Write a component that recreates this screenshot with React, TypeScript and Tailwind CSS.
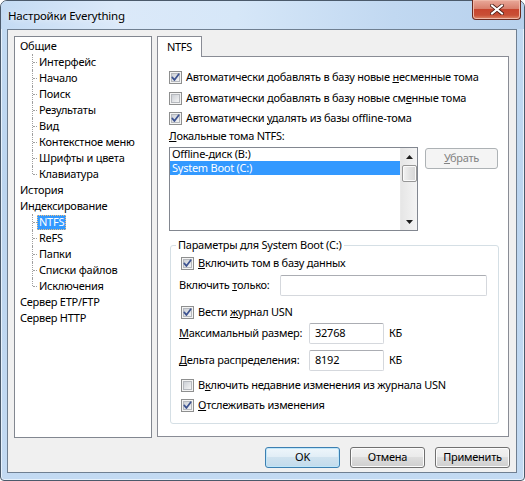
import React from "react";

const tree = [
  {
    title: "Общие",
    kids: ["Интерфейс", "Начало", "Поиск", "Результаты", "Вид", "Контекстное меню", "Шрифты и цвета", "Клавиатура"],
  },
  { title: "История", kids: [] },
  { title: "Индексирование", kids: ["NTFS", "ReFS", "Папки", "Списки файлов", "Исключения"] },
  { title: "Сервер ETP/FTP", kids: [] },
  { title: "Сервер HTTP", kids: [] },
];

function Check({ checked }: { checked?: boolean }) {
  return (
    <svg width="13" height="13" viewBox="0 0 13 13" className="shrink-0">
      <defs>
        <linearGradient id="cbg" x1="0" y1="0" x2="1" y2="1">
          <stop offset="0" stopColor="#c9cdd3" />
          <stop offset="1" stopColor="#f7f7f7" />
        </linearGradient>
      </defs>
      <rect x="0.5" y="0.5" width="12" height="12" fill="#f4f4f4" stroke="#8e8f8f" />
      <rect x="2.5" y="2.5" width="8" height="8" fill="url(#cbg)" stroke="#b5b8bd" />
      {checked && (
        <path d="M3.3 6.4 L5.4 9 L9.7 3.2" fill="none" stroke="#3c5290" strokeWidth="1.7" strokeLinecap="round" strokeLinejoin="round" />
      )}
    </svg>
  );
}

function CheckRow({ checked, children, className = "" }: { checked?: boolean; children: React.ReactNode; className?: string }) {
  return (
    <div className={`flex items-center gap-[4px] ${className}`}>
      <Check checked={checked} />
      <span className="whitespace-nowrap">{children}</span>
    </div>
  );
}

function Edit({ value, className = "" }: { value?: string; className?: string }) {
  return (
    <div
      className={`h-[21px] flex items-center pl-[5px] bg-white border border-[#d5d8dd] border-t-[#abadb3] rounded-[2px] ${className}`}
    >
      {value}
    </div>
  );
}

function Button({ children, primary, disabled }: { children: React.ReactNode; primary?: boolean; disabled?: boolean }) {
  if (disabled)
    return (
      <div className="w-[73px] h-[21px] flex items-center justify-center rounded-[3px] border border-[#adb2b5] bg-[#f4f4f4] text-[#838383]">
        {children}
      </div>
    );
  return (
    <div
      className={`w-[75px] h-[21px] flex items-center justify-center rounded-[3px] border ${
        primary
          ? "border-[#3c7fb1] bg-[linear-gradient(to_bottom,#eef6fb_0%,#e2eef6_45%,#cfe2ef_50%,#c2dbec_100%)] shadow-[inset_0_0_0_1px_#bfe6f9]"
          : "border-[#707070] bg-[linear-gradient(to_bottom,#f2f2f2_0%,#ebebeb_45%,#dddddd_50%,#cfcfcf_100%)] shadow-[inset_0_0_0_1px_#fcfcfc]"
      }`}
    >
      {children}
    </div>
  );
}

function Tree() {
  return (
    <div className="w-[138px] h-[402px] bg-white border border-[#828790] pt-[1px]">
      {tree.map((g) => (
        <div key={g.title}>
          <div className="h-4 flex items-center pl-[5px] whitespace-nowrap">{g.title}</div>
          {g.kids.map((k, i) => {
            const last = i === g.kids.length - 1;
            const sel = k === "NTFS";
            return (
              <div key={k} className="relative h-4 flex items-center pl-[22px] whitespace-nowrap">
                <span
                  className={`absolute left-[17px] top-0 border-l border-dotted border-[#a0a0a0] ${last ? "h-[8px]" : "h-4"}`}
                />
                <span className="absolute left-[18px] top-[8px] w-[4px] border-t border-dotted border-[#a0a0a0]" />
                <span
                  className={
                    sel
                      ? "h-[15px] flex items-center px-[1px] bg-[#3399ff] text-white border border-dotted border-[#f0c080]"
                      : "px-[2px]"
                  }
                >
                  {k}
                </span>
              </div>
            );
          })}
        </div>
      ))}
    </div>
  );
}

function ListBox() {
  return (
    <div className="w-[249px] h-[84px] bg-white border border-[#828790] flex">
      <div className="flex-1 pt-0">
        <div className="h-[13px] flex items-center pl-[2px] whitespace-nowrap">Offline-диск (B:)</div>
        <div className="h-[14px] flex items-center pl-[2px] bg-[#3399ff] text-white whitespace-nowrap">System Boot (C:)</div>
      </div>
      <div className="w-[17px] h-full flex flex-col items-center bg-[linear-gradient(to_right,#e6e6e6,#f4f4f4)] border-l border-[#e9e9e9]">
        <div className="h-[17px] w-full flex items-center justify-center">
          <svg width="7" height="4" viewBox="0 0 7 4">
            <path d="M0 4 L3.5 0 L7 4 Z" fill="#1e1e1e" />
          </svg>
        </div>
        <div className="w-[15px] h-[17px] rounded-[2px] border border-[#979797] bg-[linear-gradient(to_right,#f3f3f3,#e2e2e2,#d6d6d6)] shadow-[inset_0_0_0_1px_#fafafa]" />
        <div className="flex-1" />
        <div className="h-[17px] w-full flex items-center justify-center">
          <svg width="7" height="4" viewBox="0 0 7 4">
            <path d="M0 0 L7 0 L3.5 4 Z" fill="#1e1e1e" />
          </svg>
        </div>
      </div>
    </div>
  );
}

function NtfsPage() {
  return (
    <div className="flex flex-col">
      <div className="relative z-10 -mb-[1px] w-[45px] h-[21px] flex items-center justify-center bg-white border border-b-0 border-[#898c95]">
        NTFS
      </div>
      <div className="w-[352px] h-[381px] bg-white border border-[#898c95] pl-[11px] pt-[10px]">
        <CheckRow checked className="h-[21px]">
          Автоматически добавлять в базу новые <u>н</u>есменные тома
        </CheckRow>
        <CheckRow className="h-[20px]">
          Автоматически добавлять в базу новые см<u>е</u>нные тома
        </CheckRow>
        <CheckRow checked className="h-[20px]">
          Автоматически <u>у</u>далять из базы offline-тома
        </CheckRow>
        <div className="h-4 flex items-center">
          <span>
            <u>Л</u>окальные тома NTFS:
          </span>
        </div>
        <div className="mt-[3px] flex items-start gap-[7px]">
          <ListBox />
          <div className="mt-[1px]">
            <Button disabled>
              <span>
                <u>У</u>брать
              </span>
            </Button>
          </div>
        </div>
        <fieldset className="mt-[6px] ml-[1px] w-[329px] border border-[#d5dfe5] rounded-[3px] pb-[8px]">
          <legend className="ml-[5px] px-[2px] h-4 leading-4 whitespace-nowrap">Параметры для System Boot (C:)</legend>
          <CheckRow checked className="h-[20px] pl-[10px]">
            <u>В</u>ключить том в базу данных
          </CheckRow>
          <div className="mt-[2px] flex items-center pl-[8px]">
            <span className="w-[101px] whitespace-nowrap">
              Включить <u>т</u>олько:
            </span>
            <Edit className="w-[207px]" />
          </div>
          <CheckRow checked className="mt-[6px] h-[20px] pl-[10px]">
            Вести <u>ж</u>урнал USN
          </CheckRow>
          <div className="mt-[1px] flex items-center pl-[8px]">
            <span className="w-[130px] whitespace-nowrap">
              <u>М</u>аксимальный размер:
            </span>
            <Edit value="32768" className="w-[75px]" />
            <span className="ml-[5px]">КБ</span>
          </div>
          <div className="mt-[6px] flex items-center pl-[8px]">
            <span className="w-[130px] whitespace-nowrap">
              <u>Д</u>ельта распределения:
            </span>
            <Edit value="8192" className="w-[75px]" />
            <span className="ml-[5px]">КБ</span>
          </div>
          <CheckRow className="mt-[5px] h-[19px] pl-[10px]">
            В<u>к</u>лючить недавние изменения из журнала USN
          </CheckRow>
          <CheckRow checked className="h-[20px] pl-[10px]">
            <u>О</u>тслеживать изменения
          </CheckRow>
        </fieldset>
      </div>
    </div>
  );
}

export default function App() {
  return (
    <div className="w-[525px] h-[481px] overflow-hidden bg-white font-['Noto_Sans',sans-serif] text-[11px] tracking-[-0.25px] text-black">
      <div className="relative w-[525px] h-[481px] flex flex-col rounded-t-[7px] rounded-b-[4px] border border-[#4b5a6b] bg-[linear-gradient(to_bottom,#c3dbf3,#bcd5ef_40%,#c3daf2)] shadow-[inset_0_0_0_1px_#e6f1fc]">
        <div className="h-[28px] flex items-start justify-between rounded-t-[6px] bg-[linear-gradient(90deg,#c4dbf3_0%,#dbe9f9_22%,#d6e7f8_45%,#c1d8f1_75%,#b7d1ed_100%)]">
          <div className="pl-[7px] pt-[6px] text-[11.5px] tracking-[-0.2px] whitespace-nowrap [text-shadow:0_0_6px_#ffffff]">
            Настройки Everything
          </div>
          <div className="mr-[3px] -mt-[1px] w-[49px] h-[20px] flex items-center justify-center rounded-b-[4px] border border-t-0 border-[#6b2a1f] bg-[linear-gradient(to_bottom,#e9a99a_0%,#d9806d_45%,#c7452e_50%,#c94f36_80%,#dd8a6a_100%)] shadow-[inset_0_0_0_1px_#f0b8a8]">
            <svg width="14" height="11" viewBox="0 0 14 11">
              <path d="M2 1.5 L12 9.5 M12 1.5 L2 9.5" stroke="#4a1c14" strokeWidth="3.6" strokeLinecap="square" />
              <path d="M2 1.5 L12 9.5 M12 1.5 L2 9.5" stroke="#ffffff" strokeWidth="2" strokeLinecap="square" />
            </svg>
          </div>
        </div>
        <div className="ml-[6px] w-[510px] h-[444px] flex flex-col border border-[#6f7f91] bg-[#f0f0f0]">
          <div className="flex pt-[6px] pl-[6px] gap-[5px]">
            <Tree />
            <NtfsPage />
          </div>
          <div className="mt-[9px] pr-[6px] flex justify-end gap-[10px]">
            <Button primary>OK</Button>
            <Button>Отмена</Button>
            <Button>Применить</Button>
          </div>
        </div>
      </div>
    </div>
  );
}
